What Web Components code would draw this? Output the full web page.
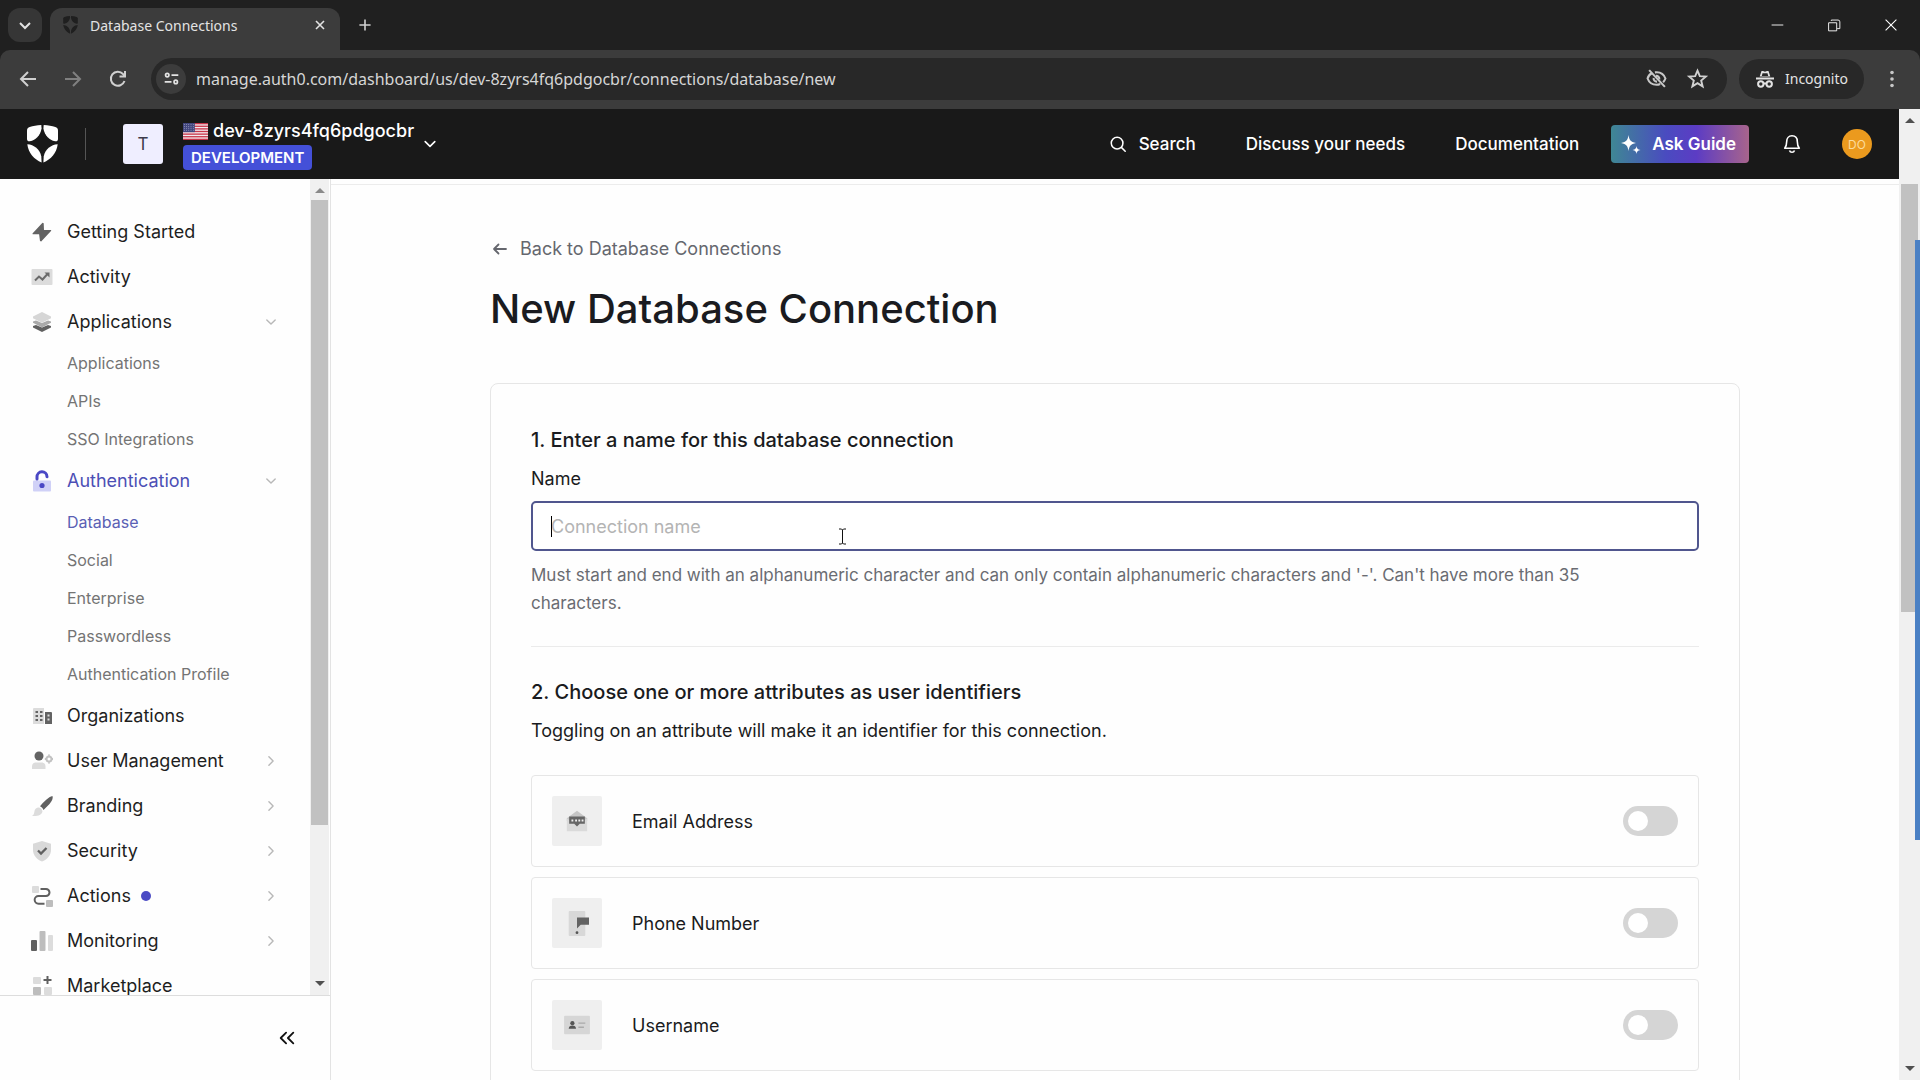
<!DOCTYPE html>
<html lang="en">
<head>
    <meta charset="utf-8">
    <title>Database Connections</title>
    <style>
        body {
            margin: 0;
            height: 100vh;
            display: flex;
            flex-direction: column;
            overflow: hidden;
            background: #fefefe;
            color: #1a1b20;
            font-family: Inter, "Liberation Sans", sans-serif;
            font-size: 18px;
        }
        .page {
            flex: 1;
            min-height: 0;
            display: flex;
        }
        .app {
            flex: 1;
            min-width: 0;
            display: flex;
            flex-direction: column;
        }
        .workspace {
            flex: 1;
            min-height: 0;
            display: flex;
        }
    </style>
</head>
<body>
    <browser-tabs>Database Connections</browser-tabs>
    <browser-toolbar url="manage.auth0.com/dashboard/us/dev-8zyrs4fq6pdgocbr/connections/database/new"></browser-toolbar>
    <div class="page">
        <div class="app">
            <app-header tenant="dev-8zyrs4fq6pdgocbr" environment="DEVELOPMENT"></app-header>
            <div class="workspace">
                <app-sidebar>
                    <nav-item icon="bolt">Getting Started</nav-item>
                    <nav-item icon="activity">Activity</nav-item>
                    <nav-item icon="layers" arrow="down">Applications</nav-item>
                    <nav-sub>Applications</nav-sub>
                    <nav-sub>APIs</nav-sub>
                    <nav-sub>SSO Integrations</nav-sub>
                    <nav-item icon="lock" arrow="down" active>Authentication</nav-item>
                    <nav-sub active>Database</nav-sub>
                    <nav-sub>Social</nav-sub>
                    <nav-sub>Enterprise</nav-sub>
                    <nav-sub>Passwordless</nav-sub>
                    <nav-sub>Authentication Profile</nav-sub>
                    <nav-item icon="building">Organizations</nav-item>
                    <nav-item icon="users" arrow="right">User Management</nav-item>
                    <nav-item icon="brush" arrow="right">Branding</nav-item>
                    <nav-item icon="shield" arrow="right">Security</nav-item>
                    <nav-item icon="flow" arrow="right" dot>Actions</nav-item>
                    <nav-item icon="bars" arrow="right">Monitoring</nav-item>
                    <nav-item icon="market">Marketplace</nav-item>
                </app-sidebar>
                <connection-page heading="New Database Connection">
                    <form-step heading="1. Enter a name for this database connection">
                        <name-field label="Name" placeholder="Connection name">Must start and end with an alphanumeric character and can only contain alphanumeric characters and '-'. Can't have more than 35 characters.</name-field>
                    </form-step>
                    <form-step heading="2. Choose one or more attributes as user identifiers" divided>
                        <step-note>Toggling on an attribute will make it an identifier for this connection.</step-note>
                        <attribute-row icon="mail">Email Address</attribute-row>
                        <attribute-row icon="phone">Phone Number</attribute-row>
                        <attribute-row icon="idcard">Username</attribute-row>
                    </form-step>
                </connection-page>
            </div>
        </div>
        <page-scrollbar class="outer"></page-scrollbar>
    </div>

    <script>
        const icons = {
            // browser
            tabmenu: '<path d="M5 8l5 5 5-5" fill="none" stroke="#e3e3e3" stroke-width="2"/>',
            close: '<path d="M5 5l10 10M15 5L5 15" fill="none" stroke="#e3e3e3" stroke-width="2"/>',
            plus: '<path d="M10 3v14M3 10h14" fill="none" stroke="#d0d0d0" stroke-width="2"/>',
            minimize: '<path d="M4 10h13" stroke="#fff" stroke-width="1"/>',
            restore: '<path d="M4 7.500h9v9H4zM7 5.500V4.500h7.500a2 2 0 0 1 2 2V14h-3" fill="none" stroke="#fff"/>',
            winclose: '<path d="M4 4l12 12M16 4L4 16" stroke="#fff" stroke-width="1.200"/>',
            back: '<path d="M18 10H3M10 3l-7 7 7 7" fill="none" stroke="#d0d0d0" stroke-width="2"/>',
            forward: '<path d="M2 10h15M10 3l7 7-7 7" fill="none" stroke="#808080" stroke-width="2"/>',
            reload: '<path d="M16.500 12A7 7 0 1 1 15 5l2 2M17 2v5.500h-5.500" fill="none" stroke="#d0d0d0" stroke-width="2"/>',
            tune: '<g fill="none" stroke="#e3e3e3" stroke-width="2"><circle cx="5" cy="6" r="2"/><path d="M10 6h8M2 14h8"/><circle cx="15" cy="14" r="2"/></g>',
            eyeoff: '<g fill="none" stroke="#c7c7c7" stroke-width="2"><path d="M3 2l15 16M6 4.500C3.500 6 2 8 1.500 10c1.500 4 5 6 8.500 6 1.500 0 2.500-.3 3.500-.8M8.500 4.200c5-.7 8.500 1.800 10 5.800-.5 1.400-1.200 2.500-2.200 3.500"/><path d="M9.500 7.500a3 3 0 0 1 3.200 3.300M7.300 9.500a3 3 0 0 0 3.200 3.500"/></g>',
            star: '<path d="M10 2.500l2.200 5.300 5.700.4-4.400 3.700 1.400 5.600-4.900-3-4.900 3 1.400-5.600L2.100 8.200l5.700-.4z" fill="none" stroke="#d0d0d0" stroke-width="1.800"/>',
            incognito: '<path d="M6.500 2h1.500l2 .7 2-.7h1.500l1.800 5.500H4.700zM1 8.500h18v2H1z" fill="#e3e3e3"/><path d="M7.500 4.200L6.800 7h6.400l-.7-2.800" fill="#282828"/><g fill="none" stroke="#e3e3e3" stroke-width="2"><circle cx="5.800" cy="15" r="2.700"/><circle cx="14.200" cy="15" r="2.700"/><path d="M8.500 14.500h3"/></g>',
            dots: '<g fill="#c7c7c7"><circle cx="10" cy="3.500" r="1.800"/><circle cx="10" cy="10" r="1.800"/><circle cx="10" cy="16.500" r="1.800"/></g>',
            // header
            search: '<g fill="none" stroke="#fff" stroke-width="1.700" stroke-linecap="round"><circle cx="9" cy="9" r="6.500"/><path d="M14 14l4 4"/></g>',
            sparkle: '<g fill="#fff"><path d="M7.500 1C8.300 6 9.500 7.700 15 9 9.500 10.300 8.300 12 7.500 17 6.700 12 5.500 10.300 0 9 5.500 7.700 6.700 6 7.500 1z"/><path d="M15.500 12c.5 2.800 1.200 3.500 4 4-2.800.5-3.500 1.200-4 4-.5-2.800-1.200-3.500-4-4 2.800-.5 3.500-1.200 4-4z"/></g>',
            bell: '<g fill="none" stroke="#fff" stroke-width="1.600" stroke-linejoin="round"><path d="M10 1.800c3.300 0 5.300 2.400 5.300 5.700 0 3.800 1 5.500 2 6.700H2.700c1-1.200 2-2.900 2-6.700 0-3.300 2-5.700 5.300-5.700z"/><path d="M7.500 16.500c.4 1.200 1.300 1.800 2.500 1.800s2.100-.6 2.500-1.800"/></g>',
            down: '<path d="M4 7l6 6 6-6" fill="none" stroke="currentColor" stroke-width="2" stroke-linecap="round" stroke-linejoin="round"/>',
            right: '<path d="M7 4l6 6-6 6" fill="none" stroke="currentColor" stroke-width="2" stroke-linecap="round" stroke-linejoin="round"/>',
            arrowleft: '<path d="M16 10H4M8.500 5.500L4 10l4.500 4.500" fill="none" stroke="currentColor" stroke-width="1.800" stroke-linecap="round" stroke-linejoin="round"/>',
            collapse: '<path d="M9 4l-6 6 6 6M17 4l-6 6 6 6" fill="none" stroke="#111" stroke-width="2" stroke-linecap="round" stroke-linejoin="round"/>',
            // navigation
            bolt: '<path d="M10.500.8L.7 11.300c-.4.500-.1 1 .4 1h6L8 19l1.200.5L19 9c.4-.5.2-1-.4-1H12l-.3-6.700z" fill="#636363"/>',
            activity: '<rect x="-.5" y="2" width="21" height="16" rx="1" fill="#dcdcdc"/><path d="M3 13.500l4-4 3.500 3 5-5.500" fill="none" stroke="#6a6a6a" stroke-width="2"/><path d="M12.500 5.500h5v5z" fill="#6a6a6a"/>',
            layers: '<path d="M1 14l3-1 6 2.500 6-2.500 3 1v1.500L10 20l-9-4.500z" fill="#606060"/><path d="M1 9.500l3-1 6 2.500 6-2.500 3 1v1.300L10 15.500l-9-4.700z" fill="#a9a9a9"/><path d="M10 0l9 4.500v1.800l-9 4.500-9-4.500V4.500z" fill="#d6d6d6"/>',
            lock: '<rect x="1" y="9.500" width="18" height="11" rx="1" fill="#d0d1f7"/><path d="M5 8V6a5 5 0 0 1 10-.3" fill="none" stroke="#4a48c5" stroke-width="3" stroke-linecap="round"/><circle cx="10" cy="14.500" r="2.600" fill="#4a48c5"/>',
            building: '<path d="M1 3a1 1 0 0 1 1-1h10v16H1z" fill="#dcdcdc"/><path d="M13 6h6a1 1 0 0 1 1 1v11h-7z" fill="#636363"/><g fill="#636363"><path d="M3.500 5H6v2H3.500zM8 5h2.500v2H8zM3.500 9H6v2H3.500zM8 9h2.500v2H8zM3.500 13H6v2H3.500zM8 13h2.500v2H8z"/></g><path d="M15.500 8.500h2v2h-2zM15.500 12.500h2v2h-2z" fill="#ddd"/>',
            users: '<circle cx="7" cy="5" r="4.500" fill="#636363"/><path d="M0 18v-2.500c0-2.500 1.500-4 4-4h5.500c2.500 0 4 1.500 4 4V18z" fill="#dcdcdc"/><circle cx="17" cy="8" r="2.500" fill="none" stroke="#c2c2c2" stroke-width="2"/><path d="M17 3.500v1.200M17 11.300v1.200M12.800 8H14M20 8h1" stroke="#c2c2c2" stroke-width="2"/>',
            brush: '<path d="M20.500 0c.8 2-.5 5-3 8l-6 6c-.7-1.700-1.800-2.900-3.500-3.700C12 5.500 16.500 1 20.500 0z" fill="#606060"/><path d="M7 11.500c2 .6 3 1.800 3.500 3.700-.7 4-5 5.300-10.500 4.800 2-1.300 2-2.500 2.500-5C3 12.800 4.700 11.300 7 11.500z" fill="#dcdcdc"/>',
            shield: '<path d="M10 0l9 2.700V9c0 5.500-4 9.500-9 11.500C5 18.500 1 14.500 1 9V2.700z" fill="#d9d9d9"/><path d="M6 9.500l3 3 5.500-5.500" fill="none" stroke="#606060" stroke-width="2.300"/>',
            flow: '<rect x="0" y="0" width="7" height="7" rx="1" fill="#dcdcdc"/><rect x="14" y="14" width="7" height="7" rx="1" fill="#bdbdbd"/><path d="M8.500 3H14a3.300 3.300 0 0 1 0 7H6.500a3.800 3.800 0 0 0 0 7.700h6" fill="none" stroke="#606060" stroke-width="2"/>',
            bars: '<rect x="-1" y="9" width="6" height="11" rx="1" fill="#606060"/><rect x="7.500" y="0" width="6" height="20" rx="1" fill="#bdbdbd"/><rect x="16" y="4" width="5" height="16" rx="1" fill="#dcdcdc"/>',
            market: '<rect x="1" y="1" width="8" height="7" rx="1" fill="#dcdcdc"/><rect x="1" y="11" width="8" height="8" rx="1" fill="#bdbdbd"/><rect x="12" y="11" width="8" height="8" rx="1" fill="#dcdcdc"/><path d="M15.500 0v8M11.500 4h8" stroke="#606060" stroke-width="2"/>',
            // attributes, on a 26 grid
            mail: '<path d="M2 10L13 2l11 8v3H2z" fill="#c6c6c6"/><path d="M2 10l11 8 11-8v14H2z" fill="#dadada"/><path d="M4.500 8h17v8H16l-3 3-3-3H4.500z" fill="#666"/><path d="M7 11.500h2v2H7zM11 11.500h2v2h-2zM14.500 11.500h2v2h-2zM18 11.500h2v2h-2z" fill="#eee"/>',
            phone: '<rect x="4" y="0" width="18" height="27" rx="1" fill="#d8d8d8"/><path d="M13 7h13v8h-9l-4 4z" fill="#636363"/><circle cx="13" cy="23.500" r="1.500" fill="#555"/>',
            idcard: '<rect x="-1" y="3" width="28" height="20" rx="1" fill="#d6d6d6"/><circle cx="8" cy="11" r="2.300" fill="#555"/><path d="M4 17c.3-2.500 1.500-3.500 4-3.500s3.700 1 4 3.500z" fill="#555"/><path d="M14.500 11h7.500M14.500 15.500h6" stroke="#aaa" stroke-width="1.500"/>'
        };

        class BaseElement extends HTMLElement {
            constructor() {
                super();
                this.attachShadow({ mode: "open" });
            }
            connectedCallback() {
                const template = document.createElement('template');
                template.innerHTML = `<style>${this.getStyles()}</style>${this.getTemplate()}`;
                this.shadowRoot.replaceChildren(template.content.cloneNode(true));
            }
        }

        class UiIcon extends BaseElement {
            getStyles() {
                return `
                    :host { display: block; flex: none; width: 20px; height: 20px; }
                    svg { display: block; width: 100%; height: 100%; overflow: visible; }
                `;
            }
            getTemplate() {
                const grid = this.getAttribute('grid') || 20;
                return `<svg viewBox="0 0 ${grid} ${grid}" aria-hidden="true">${icons[this.getAttribute('name')]}</svg>`;
            }
        }
        customElements.define("ui-icon", UiIcon);

        class BrandMark extends BaseElement {
            getStyles() {
                return `
                    :host { display: block; flex: none; width: 31px; height: 38px; }
                    svg { display: block; width: 100%; height: 100%; }
                `;
            }
            getTemplate() {
                return `
                    <svg viewBox="0 0 31 38" fill="currentColor" aria-hidden="true">
                        <path d="M14.300 0C9.800.2 6 .9 2.700 2 1 2.600 0 3.800 0 5.500V14c0 1.700 1.200 2.600 2.800 2.300C9 15 13.300 10.300 14.600 3.500z"/>
                        <path d="M.3 19.200c6.800.4 12.500 5 14 12.200L14.600 37.500C7.200 34.500 1.200 27.500.3 19.200z"/>
                        <path d="M16.700 0c4.500.2 8.300.9 11.600 2C30 2.600 31 3.800 31 5.500V14c0 1.700-1.200 2.600-2.800 2.300C22 15 17.700 10.300 16.400 3.500z"/>
                        <path d="M30.700 19.200c-6.800.4-12.500 5-14 12.200l-.3 6.100c7.400-3 13.400-10 14.300-18.300z"/>
                    </svg>
                `;
            }
        }
        customElements.define("brand-mark", BrandMark);

        class BrowserTabs extends BaseElement {
            getStyles() {
                return `
                    :host {
                        display: flex;
                        align-items: flex-end;
                        height: 50px;
                        background: #202020;
                        color: #e3e3e3;
                        font-family: "Noto Sans", "Open Sans", sans-serif;
                        font-size: 14px;
                    }
                    button {
                        display: grid;
                        place-items: center;
                        border: 0;
                        padding: 0;
                        background: none;
                    }
                    .menu {
                        width: 34px;
                        height: 34px;
                        margin: 0 8px 8px;
                        border-radius: 12px;
                        background: #363636;
                    }
                    .tab {
                        display: flex;
                        align-items: center;
                        gap: 12px;
                        box-sizing: border-box;
                        width: 290px;
                        height: 42px;
                        padding: 0 12px 8px 13px;
                        border-radius: 12px 12px 0 0;
                        background: #3c3c3c;
                    }
                    .tab brand-mark { width: 15px; height: 18px; color: #1f1f1f; }
                    .tab span { flex: 1; }
                    .tab ui-icon { width: 16px; height: 16px; }
                    .new { margin: 0 17px; }
                    .new ui-icon { width: 16px; height: 16px; margin-bottom: 17px; }
                    .window { display: flex; margin: 0 1px 0 auto; height: 50px; }
                    .window button { width: 57px; }
                    .window ui-icon { width: 18px; height: 18px; }
                `;
            }
            getTemplate() {
                return `
                    <button class="menu" aria-label="Search tabs"><ui-icon name="tabmenu"></ui-icon></button>
                    <div class="tab">
                        <brand-mark></brand-mark>
                        <span><slot></slot></span>
                        <button aria-label="Close tab"><ui-icon name="close"></ui-icon></button>
                    </div>
                    <button class="new" aria-label="New tab"><ui-icon name="plus"></ui-icon></button>
                    <div class="window">
                        <button aria-label="Minimize"><ui-icon name="minimize"></ui-icon></button>
                        <button aria-label="Restore"><ui-icon name="restore"></ui-icon></button>
                        <button aria-label="Close"><ui-icon name="winclose"></ui-icon></button>
                    </div>
                `;
            }
        }
        customElements.define("browser-tabs", BrowserTabs);

        class BrowserToolbar extends BaseElement {
            getStyles() {
                return `
                    :host { display: block; background: #202020; }
                    .bar {
                        display: flex;
                        align-items: center;
                        height: 57px;
                        padding: 0 18px 2px;
                        border-radius: 10px 10px 0 0;
                        background: #3c3c3c;
                        color: #e3e3e3;
                        font-family: "Noto Sans", "Open Sans", sans-serif;
                    }
                    button { display: grid; place-items: center; border: 0; padding: 0; background: none; }
                    .moves { display: flex; gap: 25px; margin-right: 23px; }
                    .address {
                        flex: 1;
                        display: flex;
                        align-items: center;
                        gap: 20px;
                        height: 42px;
                        padding: 0 19px 0 5px;
                        border-radius: 21px;
                        background: #282828;
                    }
                    .site { width: 30px; height: 30px; border-radius: 15px; background: #3c3c3c; }
                    .site ui-icon { width: 17px; height: 17px; }
                    input {
                        flex: 1;
                        min-width: 0;
                        margin-left: -10px;
                        padding: 0;
                        border: 0;
                        outline: 0;
                        background: none;
                        color: #d6d6d6;
                        font: inherit;
                        font-size: 16px;
                    }
                    .address ui-icon.big { width: 21px; height: 21px; }
                    .incognito {
                        display: flex;
                        align-items: center;
                        gap: 10px;
                        height: 40px;
                        margin: 0 18px 0 12px;
                        padding: 0 16px;
                        border-radius: 20px;
                        background: #282828;
                        font-size: 14px;
                    }
                `;
            }
            getTemplate() {
                return `
                    <div class="bar">
                        <div class="moves">
                            <button aria-label="Back"><ui-icon name="back"></ui-icon></button>
                            <button aria-label="Forward"><ui-icon name="forward"></ui-icon></button>
                            <button aria-label="Reload"><ui-icon name="reload"></ui-icon></button>
                        </div>
                        <div class="address">
                            <button class="site" aria-label="Site information"><ui-icon name="tune"></ui-icon></button>
                            <input type="text" aria-label="Address" value="${this.getAttribute('url')}">
                            <button aria-label="Third-party cookies blocked"><ui-icon class="big" name="eyeoff"></ui-icon></button>
                            <button aria-label="Bookmark"><ui-icon class="big" name="star"></ui-icon></button>
                        </div>
                        <div class="incognito"><ui-icon name="incognito"></ui-icon>Incognito</div>
                        <button aria-label="Menu"><ui-icon name="dots"></ui-icon></button>
                    </div>
                `;
            }
        }
        customElements.define("browser-toolbar", BrowserToolbar);

        class UsFlag extends BaseElement {
            getStyles() {
                return `
                    :host { display: block; width: 25px; height: 17px; }
                    svg { display: block; width: 100%; height: 100%; }
                `;
            }
            getTemplate() {
                let stripes = '';
                let stars = '';
                for (let i = 0; i < 13; i += 2) {
                    stripes += `<rect y="${i}" width="19" height="1" fill="#c8354a"/>`;
                }
                for (let y = 1; y < 7; y += 1.5) {
                    for (let x = 1; x < 9; x += 1.7) {
                        stars += `<circle cx="${x}" cy="${y}" r=".3" fill="#fff"/>`;
                    }
                }
                return `
                    <svg viewBox="0 0 19 13" preserveAspectRatio="none" role="img" aria-label="US">
                        <rect width="19" height="13" fill="#f3e9ee"/>${stripes}
                        <rect width="9" height="7" fill="#42467f"/>${stars}
                    </svg>
                `;
            }
        }
        customElements.define("us-flag", UsFlag);

        class AppHeader extends BaseElement {
            getStyles() {
                return `
                    :host {
                        display: flex;
                        align-items: center;
                        height: 70px;
                        padding: 0 27px;
                        background: #191919;
                        color: #fff;
                        font-size: 17px;
                        font-weight: 500;
                    }
                    button {
                        display: flex;
                        align-items: center;
                        border: 0;
                        padding: 0;
                        background: none;
                        color: inherit;
                        font: inherit;
                    }
                    a { color: inherit; text-decoration: none; }
                    .line { width: 1px; height: 32px; margin: 0 37px 0 27px; background: #555; }
                    .tenant { gap: 8px; text-align: left; }
                    .avatar {
                        display: grid;
                        place-items: center;
                        width: 40px;
                        height: 40px;
                        margin-right: 12px;
                        border-radius: 3px;
                        background: #efeeff;
                        color: #3c3a4a;
                        font-weight: 400;
                    }
                    .names { display: flex; flex-direction: column; align-items: flex-start; gap: 3px; padding-top: 2px; }
                    .name { display: flex; align-items: center; gap: 5px; line-height: 22px; font-size: 18px; }
                    .badge {
                        padding: 0 8px;
                        border-radius: 4px;
                        background: #4450d8;
                        font-size: 15px;
                        font-weight: 600;
                        line-height: 25px;
                    }
                    .tenant ui-icon { width: 16px; height: 16px; }
                    .links { display: flex; align-items: center; gap: 50px; margin-left: auto; }
                    .search { gap: 12px; }
                    .search ui-icon { width: 18px; height: 18px; }
                    .guide {
                        gap: 11px;
                        height: 38px;
                        margin: 0 33px 0 32px;
                        padding: 0 13px 0 10px;
                        border-radius: 4px;
                        background: linear-gradient(90deg, #3f8794, #4a4bc0 40%, #5c3cc4 62%, #a8648c);
                        font-weight: 600;
                    }
                    .user {
                        display: grid;
                        place-items: center;
                        width: 30px;
                        height: 30px;
                        margin-left: 40px;
                        border-radius: 15px;
                        background: #eb9a1e;
                        color: #fbdc9c;
                        font-size: 12px;
                        font-weight: 400;
                    }
                `;
            }
            getTemplate() {
                return `
                    <brand-mark></brand-mark>
                    <div class="line"></div>
                    <button class="tenant">
                        <span class="avatar">T</span>
                        <span class="names">
                            <span class="name"><us-flag></us-flag>${this.getAttribute('tenant')}</span>
                            <span class="badge">${this.getAttribute('environment')}</span>
                        </span>
                        <ui-icon name="down"></ui-icon>
                    </button>
                    <div class="links">
                        <button class="search"><ui-icon name="search"></ui-icon>Search</button>
                        <a href="#needs">Discuss your needs</a>
                        <a href="#docs">Documentation</a>
                    </div>
                    <button class="guide"><ui-icon name="sparkle"></ui-icon>Ask Guide</button>
                    <button aria-label="Notifications"><ui-icon name="bell"></ui-icon></button>
                    <button class="user">DO</button>
                `;
            }
        }
        customElements.define("app-header", AppHeader);

        class PageScrollbar extends BaseElement {
            getStyles() {
                return `
                    :host {
                        display: flex;
                        flex-direction: column;
                        align-items: center;
                        flex: none;
                        width: 19px;
                        background: #f0f0f0;
                    }
                    :host(.outer) { position: relative; width: 21px; }
                    .up, .down { border: 5px solid transparent; }
                    .up { margin: 4px 0 7px; border-bottom-color: #8a8a8a; }
                    .down { margin: 9px 0 4px; border-top-color: #505050; }
                    .track { flex: 1; align-self: stretch; padding: 0 1px; }
                    .thumb { height: 81%; background: #c1c1c1; }
                    :host(.outer) .up { margin: 4px 0 9px; border-bottom-color: #505050; }
                    :host(.outer) .track { padding: 52px 2px 0; }
                    :host(.outer) .thumb { height: 49%; }
                    .strip { display: none; }
                    :host(.outer) .strip {
                        display: block;
                        position: absolute;
                        right: 0;
                        top: 131px;
                        width: 5px;
                        height: 600px;
                        background: #4a80c4;
                    }
                `;
            }
            getTemplate() {
                return `
                    <div class="up"></div>
                    <div class="track"><div class="thumb"></div></div>
                    <div class="down"></div>
                    <div class="strip"></div>
                `;
            }
        }
        customElements.define("page-scrollbar", PageScrollbar);

        class AppSidebar extends BaseElement {
            getStyles() {
                return `
                    :host {
                        display: flex;
                        flex-direction: column;
                        flex: none;
                        width: 330px;
                        border-right: 1px solid #e3e3e3;
                    }
                    .scroll { flex: 1; min-height: 0; display: flex; padding-right: 1px; }
                    nav { flex: 1; overflow: hidden; padding: 30px 0 0 31px; }
                    footer {
                        display: flex;
                        align-items: center;
                        justify-content: flex-end;
                        height: 84px;
                        padding-right: 34px;
                        border-top: 1px solid #ddd;
                    }
                    footer button { border: 0; padding: 0; background: none; }
                    footer ui-icon { width: 18px; height: 18px; }
                `;
            }
            getTemplate() {
                return `
                    <div class="scroll">
                        <nav><slot></slot></nav>
                        <page-scrollbar></page-scrollbar>
                    </div>
                    <footer><button aria-label="Collapse sidebar"><ui-icon name="collapse"></ui-icon></button></footer>
                `;
            }
        }
        customElements.define("app-sidebar", AppSidebar);

        class NavItem extends BaseElement {
            getStyles() {
                return `
                    :host { display: block; }
                    a {
                        display: flex;
                        align-items: center;
                        height: 45px;
                        padding-right: 32px;
                        color: #1e1e1e;
                        text-decoration: none;
                    }
                    :host([active]) a { color: #4c4fb5; }
                    .icon { margin: 0 15px 0 1px; }
                    .arrow { width: 14px; height: 14px; margin-left: auto; color: #b8b8b8; }
                    .dot { width: 10px; height: 10px; margin-left: 10px; border-radius: 5px; background: #4b4bc4; }
                `;
            }
            getTemplate() {
                const arrow = this.getAttribute('arrow');
                return `
                    <a href="#${this.getAttribute('icon')}">
                        <ui-icon class="icon" name="${this.getAttribute('icon')}"></ui-icon>
                        <slot></slot>
                        ${this.hasAttribute('dot') ? '<span class="dot"></span>' : ''}
                        ${arrow ? `<ui-icon class="arrow" name="${arrow}"></ui-icon>` : ''}
                    </a>
                `;
            }
        }
        customElements.define("nav-item", NavItem);

        class NavSub extends BaseElement {
            getStyles() {
                return `
                    :host { display: block; padding-left: 36px; font-size: 16px; line-height: 38px; }
                    a { color: #747474; text-decoration: none; }
                    :host([active]) a { color: #5a60b4; }
                `;
            }
            getTemplate() {
                return `<a href="#sub"><slot></slot></a>`;
            }
        }
        customElements.define("nav-sub", NavSub);

        class ConnectionPage extends BaseElement {
            getStyles() {
                return `
                    :host { display: block; flex: 1; min-width: 0; overflow: hidden; }
                    .edge { height: 5px; border-bottom: 1px solid #ececec; }
                    .content { max-width: 1250px; margin: 0 auto; padding: 50px 40px 0; }
                    .back {
                        display: flex;
                        align-items: center;
                        gap: 10px;
                        color: #65676e;
                        line-height: 28px;
                        text-decoration: none;
                    }
                    h1 {
                        margin: 21px 0 49px;
                        font-size: 40px;
                        font-weight: 500;
                        line-height: 50px;
                    }
                    .card { padding: 41px 40px 40px; border: 1px solid #e6e6e6; border-radius: 8px; }
                `;
            }
            getTemplate() {
                return `
                    <div class="edge"></div>
                    <div class="content">
                        <a class="back" href="#connections"><ui-icon name="arrowleft"></ui-icon>Back to Database Connections</a>
                        <h1>${this.getAttribute('heading')}</h1>
                        <div class="card"><slot></slot></div>
                    </div>
                `;
            }
        }
        customElements.define("connection-page", ConnectionPage);

        class FormStep extends BaseElement {
            getStyles() {
                return `
                    :host { display: block; }
                    :host([divided]) { margin-top: 29px; padding-top: 30px; border-top: 1px solid #ebebeb; }
                    h2 { margin: 0 0 10px; font-size: 20px; font-weight: 500; line-height: 30px; }
                `;
            }
            getTemplate() {
                return `<h2>${this.getAttribute('heading')}</h2><slot></slot>`;
            }
        }
        customElements.define("form-step", FormStep);

        class NameField extends BaseElement {
            getStyles() {
                return `
                    :host { display: block; }
                    label { display: block; margin-bottom: 8px; line-height: 28px; }
                    .box { position: relative; }
                    input {
                        display: block;
                        box-sizing: border-box;
                        width: 100%;
                        height: 50px;
                        padding: 0 18px;
                        border: 2px solid #50568e;
                        border-radius: 5px;
                        outline: 0;
                        background: #fff;
                        font: inherit;
                    }
                    input::placeholder { color: #b4b4b4; opacity: 1; }
                    .caret { position: absolute; left: 20px; top: 15px; width: 1px; height: 21px; background: #000; }
                    .pointer { position: absolute; left: 307px; top: 27px; width: 9px; height: 17px; }
                    p { margin: 10px 0 0; padding-right: 40px; color: #6a6c72; font-size: 17px; line-height: 28px; }
                `;
            }
            getTemplate() {
                return `
                    <label for="name">${this.getAttribute('label')}</label>
                    <div class="box">
                        <input id="name" type="text" placeholder="${this.getAttribute('placeholder')}">
                        <span class="caret"></span>
                        <svg class="pointer" viewBox="0 0 9 17" aria-hidden="true"><path d="M1 1h2.500l1 1 1-1H8M1 16h2.500l1-1 1 1H8M4.500 2v13" fill="none" stroke="#111"/></svg>
                    </div>
                    <p><slot></slot></p>
                `;
            }
        }
        customElements.define("name-field", NameField);

        class StepNote extends BaseElement {
            getStyles() {
                return `:host { display: block; margin-bottom: 30px; line-height: 28px; }`;
            }
            getTemplate() {
                return `<slot></slot>`;
            }
        }
        customElements.define("step-note", StepNote);

        class AttributeRow extends BaseElement {
            getStyles() {
                return `
                    :host {
                        display: flex;
                        align-items: center;
                        height: 90px;
                        margin-bottom: 10px;
                        padding: 0 20px;
                        border: 1px solid #e6e6e6;
                        border-radius: 4px;
                    }
                    .tile {
                        display: grid;
                        place-items: center;
                        width: 50px;
                        height: 50px;
                        margin-right: 30px;
                        border-radius: 2px;
                        background: #efefef;
                    }
                    .tile ui-icon { width: 24px; height: 24px; }
                    label { flex: 1; }
                    input {
                        display: flex;
                        align-items: center;
                        appearance: none;
                        box-sizing: border-box;
                        width: 55px;
                        height: 30px;
                        margin: 0;
                        padding: 5px;
                        border-radius: 15px;
                        background: #d5d5d5;
                    }
                    input::before { content: ""; width: 20px; height: 20px; border-radius: 10px; background: #fff; }
                    input:checked { justify-content: flex-end; background: #4450d8; }
                `;
            }
            getTemplate() {
                return `
                    <span class="tile"><ui-icon name="${this.getAttribute('icon')}" grid="26"></ui-icon></span>
                    <label for="toggle"><slot></slot></label>
                    <input id="toggle" type="checkbox" role="switch">
                `;
            }
        }
        customElements.define("attribute-row", AttributeRow);
    </script>
</body>
</html>
